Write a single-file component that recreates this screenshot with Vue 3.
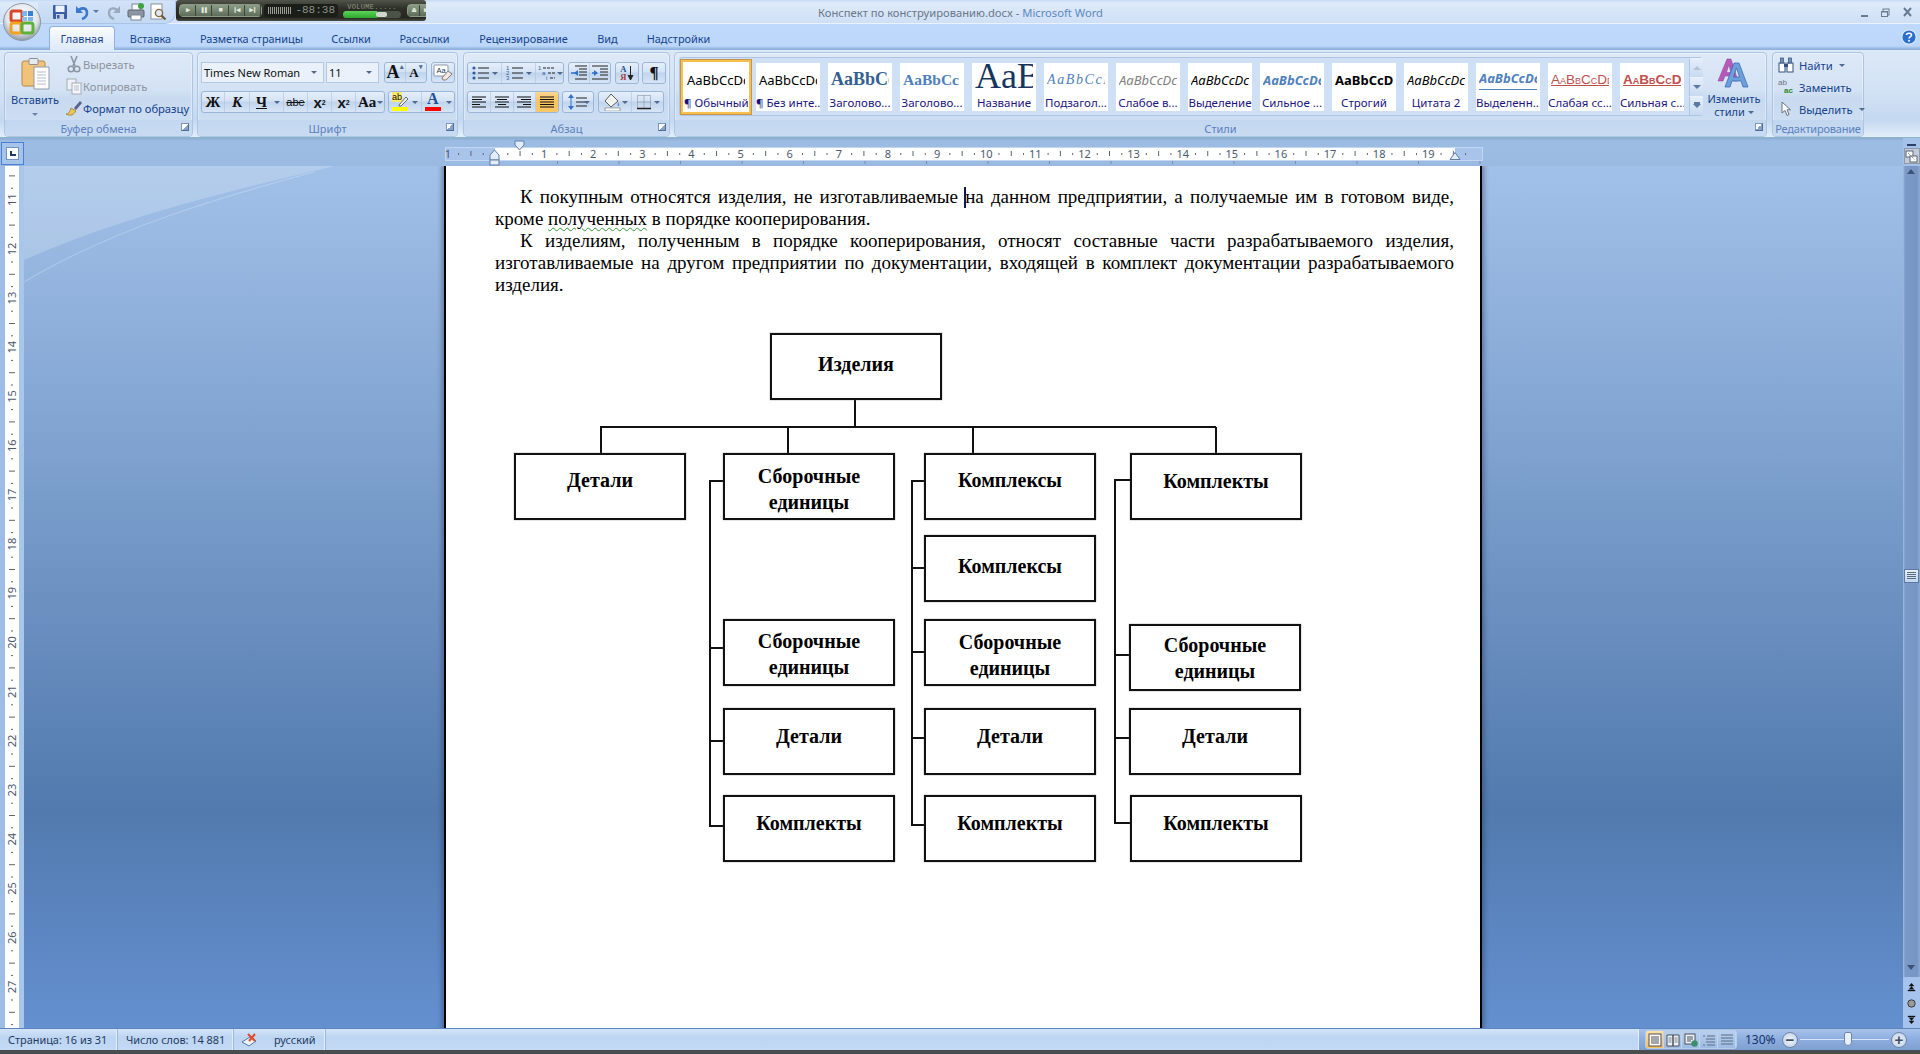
<script setup>
const tabs = [
  { t: 'Главная', w: 66, active: true }, { t: 'Вставка', w: 71 }, { t: 'Разметка страницы', w: 131 },
  { t: 'Ссылки', w: 68 }, { t: 'Рассылки', w: 79 }, { t: 'Рецензирование', w: 119 },
  { t: 'Вид', w: 49 }, { t: 'Надстройки', w: 93 },
]
const styles = [
  { s: 'AaBbCcDc', l: '¶ Обычный', c: 'normal', sel: true },
  { s: 'AaBbCcDc', l: '¶ Без инте...', c: 'normal' },
  { s: 'AaBbCc', l: 'Заголово...', c: 'h1' },
  { s: 'AaBbCc', l: 'Заголово...', c: 'h2' },
  { s: 'AaB', l: 'Название', c: 'title' },
  { s: 'AaBbCcI', l: 'Подзагол...', c: 'sub' },
  { s: 'AaBbCcDc', l: 'Слабое в...', c: 'weak' },
  { s: 'AaBbCcDc', l: 'Выделение', c: 'em' },
  { s: 'AaBbCcDc', l: 'Сильное ...', c: 'strong-em' },
  { s: 'AaBbCcDc', l: 'Строгий', c: 'strict' },
  { s: 'AaBbCcDc', l: 'Цитата 2', c: 'em' },
  { s: 'AaBbCcDc', l: 'Выделенн...', c: 'quote' },
  { s: 'AaBbCcDd', l: 'Слабая сс...', c: 'ref1' },
  { s: 'AaBbCcDd', l: 'Сильная с...', c: 'ref2' },
]
const aligns = [
  { rows: [[1, 15], [1, 11], [1, 15], [1, 9], [1, 15]] },
  { rows: [[1, 15], [3, 13], [1, 15], [4, 12], [1, 15]] },
  { rows: [[1, 15], [5, 15], [1, 15], [7, 15], [1, 15]] },
  { rows: [[1, 15], [1, 15], [1, 15], [1, 15], [1, 15]], on: true },
]
const zero = 50
const cm = 49.12
const hNums = Array.from({ length: 20 }, (_, i) => i).filter(i => i > 0).map(i => ({ n: i, x: zero + i * cm }))
const hDots = []
const hDash = []
for (let i = -1; i < 20; i++) {
  hDots.push(zero + (i + 0.25) * cm, zero + (i + 0.75) * cm)
  hDash.push(zero + (i + 0.5) * cm)
}
const tabStops = Array.from({ length: 16 }, (_, i) => 112 + i * 61.5)
const vNums = Array.from({ length: 17 }, (_, i) => ({ n: i + 11, y: 34 + i * 49.2 }))
const vDots = []
const vDash = []
for (let i = -1; i < 17; i++) {
  vDots.push(34 + (i + 0.25) * 49.2, 34 + (i + 0.75) * 49.2)
  vDash.push(34 + (i + 0.5) * 49.2)
}
const nodes = [
  { x: 770, y: 333, w: 172, h: 67, top: 16, text: ['Изделия'] },
  { x: 514, y: 453, w: 172, h: 67, top: 12, text: ['Детали'] },
  { x: 723, y: 453, w: 172, h: 67, top: 8, text: ['Сборочные', 'единицы'] },
  { x: 924, y: 453, w: 172, h: 67, top: 12, text: ['Комплексы'] },
  { x: 1130, y: 453, w: 172, h: 67, top: 13, text: ['Комплекты'] },
  { x: 924, y: 535, w: 172, h: 67, top: 16, text: ['Комплексы'] },
  { x: 723, y: 619, w: 172, h: 67, top: 7, text: ['Сборочные', 'единицы'] },
  { x: 924, y: 619, w: 172, h: 67, top: 8, text: ['Сборочные', 'единицы'] },
  { x: 1129, y: 624, w: 172, h: 67, top: 6, text: ['Сборочные', 'единицы'] },
  { x: 723, y: 708, w: 172, h: 67, top: 13, text: ['Детали'] },
  { x: 924, y: 708, w: 172, h: 67, top: 13, text: ['Детали'] },
  { x: 1129, y: 708, w: 172, h: 67, top: 13, text: ['Детали'] },
  { x: 723, y: 795, w: 172, h: 67, top: 13, text: ['Комплекты'] },
  { x: 924, y: 795, w: 172, h: 67, top: 13, text: ['Комплекты'] },
  { x: 1130, y: 795, w: 172, h: 67, top: 13, text: ['Комплекты'] },
].map(n => ({ ...n, style: { left: n.x - 446 + 'px', top: n.y - 166 + 'px', width: n.w + 'px', height: n.h + 'px', paddingTop: n.top + 'px' } }))
const wires = [
  'M855 399V427', 'M601 427H1216', 'M601 426V453', 'M788 427V453', 'M973 427V453', 'M1216 427V453',
  'M723 481H710V826H724', 'M710 648H723', 'M709 741H723',
  'M924 481H912V825H924', 'M912 568H924', 'M912 652H924', 'M912 738H925',
  'M1130 480H1115V823H1130', 'M1115 655H1129', 'M1115 738H1129',
]
</script>

<template>
  <div class="app">
    <!-- Title bar -->
    <header class="titlebar">
      <div class="qat">
        <svg class="qi" width="18" height="18" viewBox="0 0 18 18"><rect x="2" y="2" width="14" height="14" rx="1" fill="#3a5ea8"/><rect x="4.500" y="2.500" width="9" height="6.500" fill="#eef3fb"/><rect x="5" y="11" width="8" height="5" fill="#c9d3e2"/><rect x="6" y="12" width="2.500" height="3.500" fill="#3a5ea8"/></svg>
        <svg class="qi undo" width="18" height="18" viewBox="0 0 18 18"><path d="M3 3V10H10" fill="#3c78cf"/><path d="M5 9C7 4 14 4 14 10C14 13 12 15 9 16" fill="none" stroke="#3c78cf" stroke-width="2.600"/></svg>
        <span class="qarrow"></span>
        <svg class="qi redo" width="18" height="18" viewBox="0 0 18 18"><path d="M15 3V10H8" fill="#9aabbd"/><path d="M13 9C11 4 4 4 4 10C4 13 6 15 9 16" fill="none" stroke="#9aabbd" stroke-width="2.400"/></svg>
        <svg class="qi" width="18" height="18" viewBox="0 0 18 18"><rect x="5" y="1" width="8" height="7" fill="#f5f7fa" stroke="#7d8794"/><rect x="1" y="7" width="16" height="7" rx="1" fill="#8c95a1" stroke="#5c6570"/><rect x="4" y="12" width="10" height="5" fill="#fff" stroke="#7d8794"/><circle cx="14" cy="3" r="3" fill="#3ca33c"/></svg>
        <svg class="qi" width="18" height="18" viewBox="0 0 18 18"><rect x="2" y="1" width="11" height="15" fill="#fff" stroke="#8a919c"/><circle cx="10" cy="10" r="3.600" fill="#dbe9f8" stroke="#8a6a3a" stroke-width="1.400"/><path d="M12.500 12.500L16.500 16.500" stroke="#6e5530" stroke-width="2"/></svg>
      </div>

      <div class="player">
        <div class="pgroup">
          <span v-for="p in ['▶', '❚❚', '■', '❙◀', '▶❙']" :key="p" class="pbtn">{{ p }}</span>
        </div>
        <div class="lcd"><span class="lcd-bars"></span><span>-88:38</span></div>
        <div class="vol">
          <span class="vol-t">VOLUME.....</span>
          <span class="vol-track"><span class="vol-fill"></span><span class="vol-thumb"></span></span>
        </div>
        <div class="pgroup eject"><span class="pbtn">⏏</span><span class="pbtn">▶</span></div>
      </div>

      <div class="doc-title">Конспект по конструированию.docx - <span>Microsoft Word</span></div>

      <div class="winctl">
        <svg width="60" height="16" viewBox="0 0 60 16">
          <rect x="1" y="11" width="7" height="2" fill="#6a7a90"/>
          <rect x="23" y="5" width="6" height="6" fill="none" stroke="#6a7a90"/><rect x="21.500" y="7.500" width="6" height="5" fill="#d6e4f6" stroke="#6a7a90"/><rect x="21" y="7" width="7" height="1.500" fill="#6a7a90"/>
          <path d="M44 4L51 12M51 4L44 12" stroke="#6a7a90" stroke-width="2"/>
        </svg>
      </div>
    </header>

    <div class="office">
      <svg width="38" height="38" viewBox="0 0 38 38">
        <defs>
          <radialGradient id="ob" cx="50%" cy="35%" r="65%"><stop offset="0" stop-color="#fdfdfd"/><stop offset=".65" stop-color="#e2e6ea"/><stop offset="1" stop-color="#8e97a3"/></radialGradient>
        </defs>
        <circle cx="19" cy="19" r="18.500" fill="url(#ob)" stroke="#8b97a8"/>
        <rect x="8" y="8" width="11" height="10" rx="2" fill="none" stroke="#d9472b" stroke-width="3"/>
        <rect x="19" y="8" width="5" height="5" fill="#7fb4e8"/><rect x="25" y="8" width="5" height="5" fill="#3a7fd0"/>
        <rect x="19" y="14" width="5" height="4" fill="#8fbfe9"/><rect x="25" y="14" width="5" height="4" fill="#7fb4e8"/>
        <rect x="8" y="20" width="10" height="10" rx="2" fill="none" stroke="#f1a21f" stroke-width="3"/>
        <rect x="19" y="20" width="11" height="10" rx="2" fill="none" stroke="#5db13c" stroke-width="3"/>
      </svg>
    </div>

    <!-- Tabs -->
    <nav class="tabs">
      <span v-for="t in tabs" :key="t.t" class="tab" :class="{ active: t.active }" :style="{ width: t.w + 'px' }">{{ t.t }}</span>
      <svg class="help" width="16" height="16" viewBox="0 0 16 16"><circle cx="8" cy="8" r="7.200" fill="#2d6fd0" stroke="#dfeafa" stroke-width="1.200"/><path d="M5.500 6C5.500 3.600 10.500 3.600 10.500 6C10.500 7.600 8 7.600 8 9.500" fill="none" stroke="#fff" stroke-width="1.600"/><circle cx="8" cy="11.800" r="1" fill="#fff"/></svg>
    </nav>

    <!-- Ribbon -->
    <section class="ribbon">
      <div class="group g-clip">
        <div class="gbody clip">
          <div class="paste">
            <svg width="30" height="32" viewBox="0 0 30 32">
              <rect x="1" y="3" width="23" height="25" rx="2" fill="#f0c27a" stroke="#b98a45"/>
              <rect x="8" y="0.500" width="9" height="6" rx="1" fill="#e6e9ee" stroke="#8a8f98"/>
              <path d="M13 9H28V31H13Z" fill="#fff" stroke="#8f9aa8"/>
              <path d="M16 14H25M16 17H25M16 20H25M16 23H25M16 26H25" stroke="#b5bdc8"/>
            </svg>
            <span class="paste-t">Вставить</span>
            <span class="down"></span>
          </div>
          <div class="smalls">
            <div class="srow dis">
              <svg class="sic" width="18" height="18" viewBox="0 0 18 18"><path d="M6 1L10 11M12 1L8 11" stroke="#8c95a2" stroke-width="1.600"/><circle cx="6" cy="14" r="2.800" fill="none" stroke="#8c95a2" stroke-width="1.500"/><circle cx="12" cy="14" r="2.800" fill="none" stroke="#8c95a2" stroke-width="1.500"/></svg>
              <span>Вырезать</span>
            </div>
            <div class="srow dis">
              <svg class="sic" width="18" height="18" viewBox="0 0 18 18"><rect x="2" y="2" width="9" height="11" fill="#eef1f5" stroke="#a3abb6"/><rect x="7" y="6" width="9" height="11" fill="#f5f7fa" stroke="#a3abb6"/><path d="M9 9H14M9 11H14M9 13H14" stroke="#b5bcc6"/></svg>
              <span>Копировать</span>
            </div>
            <div class="srow">
              <svg class="sic" width="18" height="18" viewBox="0 0 18 18"><path d="M1 15C4 15 5 12 6 9L11 12C9 15 6 18 1 15Z" fill="#e9c55a" stroke="#9a7a2a" stroke-width=".8"/><path d="M9 9L15 2L17 4L11 11" fill="#5a5f8c"/></svg>
              <span>Формат по образцу</span>
            </div>
          </div>
        </div>
        <div class="glabel">Буфер обмена<i class="launch"></i></div>
      </div>

      <div class="group g-font">
        <div class="gbody rows font">
          <div class="row">
            <div class="combo w-font"><span>Times New Roman</span><span class="dn"></span></div>
            <div class="combo w-size"><span>11</span><span class="dn"></span></div>
            <div class="bg w-grow"><span class="b big">A<sup>▴</sup></span><span class="b big small">A<sup>▾</sup></span></div>
            <div class="bg w-clear"><span class="b">
              <svg width="20" height="18" viewBox="0 0 20 18"><rect x="1" y="1" width="14" height="11" rx="1" fill="#fff" stroke="#8b97a8"/><text x="3.500" y="9" font-size="7.500" font-family="Liberation Sans, sans-serif" fill="#203a60">Aa</text><path d="M9 14L15 7L19 10L13 16H10Z" fill="#f2e8e0" stroke="#8b7a78"/></svg>
            </span></div>
          </div>
          <div class="row">
            <div class="bg w-fmt">
              <span class="b f serif bold w1">Ж</span>
              <span class="b f serif bold ital w2">К</span>
              <span class="b f serif bold und w3">Ч<i class="dn2"></i></span>
              <span class="b f sans strike w4">abe</span>
              <span class="b f bold sans w4">x<sub>2</sub></span>
              <span class="b f bold sans w4">x<sup>2</sup></span>
              <span class="b f serif bold w5">Aa<i class="dn2"></i></span>
            </div>
            <div class="bg w-col">
              <span class="b f col1"><span class="colr"><span class="hl-t">ab</span><svg width="12" height="12" viewBox="0 0 12 12"><path d="M2 10L9 2L11 4L4 11H2Z" fill="#f2f2f2" stroke="#6b6b6b"/></svg><i class="bar yellow"></i></span><i class="dn2"></i></span>
              <span class="b f col2"><span class="colr a"><span class="serif bold a-t">A</span><i class="bar red"></i></span><i class="dn2"></i></span>
            </div>
          </div>
        </div>
        <div class="glabel">Шрифт<i class="launch"></i></div>
      </div>

      <div class="group g-para">
        <div class="gbody rows para">
          <div class="row">
            <div class="bg w-list">
              <span class="b l1"><svg width="18" height="16" viewBox="0 0 18 16"><g fill="#2f5da0"><circle cx="2" cy="3" r="1.600"/><circle cx="2" cy="8" r="1.600"/><circle cx="2" cy="13" r="1.600"/></g><path d="M6 3H17M6 8H17M6 13H17" stroke="#222" stroke-width="1.200"/></svg><i class="dn2"></i></span>
              <span class="b l2"><svg width="18" height="16" viewBox="0 0 18 16"><g fill="#2f5da0" font-size="6" font-family="Liberation Sans, sans-serif"><text x="0" y="5">1</text><text x="0" y="10">2</text><text x="0" y="15">3</text></g><path d="M6 3H17M6 8H17M6 13H17" stroke="#222" stroke-width="1.200"/></svg><i class="dn2"></i></span>
              <span class="b l3"><svg width="18" height="16" viewBox="0 0 18 16"><g fill="#2f5da0" font-size="6" font-family="Liberation Sans, sans-serif"><text x="0" y="5">1</text><text x="4" y="10">a</text><text x="8" y="15">i</text></g><path d="M5 3H17M10 8H17M12 13H17" stroke="#222" stroke-width="1.200" stroke-dasharray="3 1"/></svg><i class="dn3"></i></span>
            </div>
            <div class="bg w-ind">
              <span class="b"><svg width="18" height="16" viewBox="0 0 18 16"><path d="M4 8L8 5V11Z" fill="#2f6fd0"/><path d="M1 8H6" stroke="#2f6fd0" stroke-width="1.500"/><path d="M5 1H17M9 4H17M9 7H17M9 10H17M5 14H17" stroke="#222"/></svg></span>
              <span class="b"><svg width="18" height="16" viewBox="0 0 18 16"><path d="M7 8L3 5V11Z" fill="#2f6fd0"/><path d="M1 8H5" stroke="#2f6fd0" stroke-width="1.500"/><path d="M1 1H17M9 4H17M9 7H17M9 10H17M1 14H17" stroke="#222"/></svg></span>
            </div>
            <div class="bg w-sq"><span class="b sort"><span class="sort-t"><em>А</em><em class="red">Я</em></span><svg width="7" height="16" viewBox="0 0 7 16"><path d="M3.500 1V13M1 10L3.500 15L6 10" stroke="#222" fill="#222"/></svg></span></div>
            <div class="bg w-sq"><span class="b pil">¶</span></div>
          </div>
          <div class="row">
            <div class="bg w-align">
              <span v-for="(a, i) in aligns" :key="i" class="b" :class="{ on: a.on }">
                <svg width="16" height="14" viewBox="0 0 16 14"><path v-for="(r, j) in a.rows" :key="j" :d="`M${r[0]} ${2 + j * 2.500}H${r[1]}`" stroke="#111" stroke-width="1.200"/></svg>
              </span>
            </div>
            <div class="bg w-space"><span class="b"><svg width="8" height="18" viewBox="0 0 8 18"><path d="M4 1L7 5H1ZM4 17L7 13H1Z" fill="#2f6fd0"/><path d="M4 4V14" stroke="#2f6fd0"/></svg><svg width="11" height="12" viewBox="0 0 11 12"><path d="M0 2H11M0 6H11M0 10H11" stroke="#222" stroke-width="1.200"/></svg><i class="dn2"></i></span></div>
            <div class="bg w-shade">
              <span class="b s1"><svg width="18" height="18" viewBox="0 0 18 18"><path d="M8 1L15 8L8 14L2 8Z" fill="#f3f3f0" stroke="#5b5b5b"/><path d="M15 9C16 11 17 12 16 13C15 14 14 12 15 9Z" fill="#5b8fd0"/><rect x="2" y="15" width="15" height="3" fill="#fff" stroke="#6b6b6b" stroke-width=".6"/></svg><i class="dn2"></i></span>
              <span class="b s2"><svg width="16" height="16" viewBox="0 0 16 16"><rect x="1.500" y="1.500" width="13" height="13" fill="none" stroke="#7a8694" stroke-dasharray="1 1"/><path d="M8 1.500V14.500M1.500 8H14.500" stroke="#7a8694" stroke-dasharray="1 1"/><path d="M1 14.500H15" stroke="#222" stroke-width="1.300"/></svg><i class="dn2"></i></span>
            </div>
          </div>
        </div>
        <div class="glabel">Абзац<i class="launch"></i></div>
      </div>

      <div class="group g-styles">
        <div class="gbody stylesb">
          <div class="gallery">
            <div class="gitems">
              <div v-for="(s, i) in styles" :key="i" class="sitem" :class="{ sel: s.sel }">
                <div class="ssample" :class="s.c"><span>{{ s.s }}</span></div>
                <div class="slabel">{{ s.l }}</div>
              </div>
            </div>
            <div class="gscroll">
              <span class="gs dim"><i class="tri up"></i></span>
              <span class="gs"><i class="tri"></i></span>
              <span class="gs"><i class="tri bar-top"></i></span>
            </div>
          </div>
          <div class="change">
            <svg width="34" height="30" viewBox="0 0 34 30">
              <path d="M1 23L10 1H14L21 23H16.500L15 18H8L6 23ZM9.500 14.500H14L11.800 7Z" fill="#b55ab8" stroke="#8f3f96" stroke-width=".5"/>
              <path d="M8 29L17 5H22L31 29H26L24 23H15L13 29ZM16.500 19H22.500L19.500 10Z" fill="#6d9fdc" stroke="#2f62ad" stroke-width=".7"/>
            </svg>
            <span>Изменить</span>
            <span>стили<i class="dn2 inl"></i></span>
          </div>
        </div>
        <div class="glabel">Стили<i class="launch"></i></div>
      </div>

      <div class="group g-edit">
        <div class="gbody edit">
          <div class="srow">
            <svg class="eic" width="16" height="16" viewBox="0 0 16 16"><rect x="1" y="6" width="6" height="9" fill="#fff" stroke="#33507e"/><rect x="9" y="6" width="6" height="9" fill="#fff" stroke="#33507e"/><rect x="2.500" y="1" width="3" height="5" fill="#6f8fb8" stroke="#33507e" stroke-width=".7"/><rect x="10.500" y="1" width="3" height="5" fill="#6f8fb8" stroke="#33507e" stroke-width=".7"/><rect x="6" y="7" width="4" height="3" fill="#33507e"/></svg>
            <span>Найти</span><i class="dn2 inl2"></i>
          </div>
          <div class="srow">
            <span class="eic rep"><b>ab</b><b class="g">ac</b></span>
            <span>Заменить</span>
          </div>
          <div class="srow">
            <svg class="eic" width="16" height="16" viewBox="0 0 16 16"><path d="M4 1V12L7 9.500L9 14.500L11 13.500L9 8.800H12.500Z" fill="#fff" stroke="#6b7280"/></svg>
            <span>Выделить</span><i class="dn2 inl2"></i>
          </div>
        </div>
        <div class="glabel wide">Редактирование</div>
      </div>
    </section>

    <!-- Workspace -->
    <main class="work">
      <div class="rulerrow">
        <button class="tabsel"><i></i></button>
        <svg class="hruler" width="1040" height="26" viewBox="0 0 1040 26">
          <rect x="0.500" y="7.500" width="1037" height="13" fill="#a9c4ea" stroke="#c3d7f1"/>
          <rect x="50" y="8" width="960" height="12" fill="#fff"/>
          <g fill="#5a6675">
            <rect v-for="d in hDots" :key="'d' + d" :x="d" y="13" width="1" height="2"/>
            <rect v-for="d in hDash" :key="'h' + d" :x="d" y="11" width="1" height="5"/>
          </g>
          <g class="rtxt">
            <text x="3" y="18">1</text>
            <text v-for="n in hNums" :key="n.n" :x="n.x" y="18">{{ n.n }}</text>
          </g>
          <g fill="#7d8ea3"><rect v-for="t in tabStops" :key="t" :x="t" y="21" width="1" height="3"/></g>
          <path d="M70 1H79V5L74.500 10L70 5Z" fill="#e4ecf7" stroke="#5e7fa8"/>
          <path d="M45 15L49.500 10L54 15V20H45Z" fill="#e4ecf7" stroke="#5e7fa8"/>
          <rect x="45" y="20" width="9" height="5" fill="#e4ecf7" stroke="#5e7fa8"/>
          <path d="M1005 19.500L1010 12.500L1015 19.500Z" fill="#e4ecf7" stroke="#5e7fa8"/>
        </svg>
        <div class="splitbox"><i class="splitdash"></i>
          <span class="rtoggle">
            <svg width="13" height="13" viewBox="0 0 13 13"><rect x="1" y="1" width="7" height="6" fill="#fff" stroke="#5a6474"/><rect x="5" y="6" width="7" height="6" fill="#fff" stroke="#5a6474"/><path d="M3 3L10 10" stroke="#5a6474" stroke-dasharray="1 1"/></svg>
          </span>
        </div>
      </div>

      <div class="mainrow">
        <div class="vruler-col">
          <svg width="14" height="862" viewBox="0 0 14 862" class="vruler">
            <g fill="#5a6675">
              <rect v-for="d in vDots" :key="'vd' + d" x="6" :y="d" width="2" height="1"/>
              <rect v-for="d in vDash" :key="'vh' + d" x="4" :y="d" width="6" height="1"/>
            </g>
            <text v-for="n in vNums" :key="n.n" class="vtxt" :transform="`translate(11 ${n.y + 6}) rotate(-90)`">{{ n.n }}</text>
          </svg>
        </div>

        <div class="canvas">
          <svg class="swoosh" width="360" height="130" viewBox="0 0 360 130">
            <path d="M0 94C110 46 220 22 310 0H0Z" fill="#fff" fill-opacity=".2"/>
            <path d="M0 116C90 62 200 30 290 6" fill="none" stroke="#fff" stroke-opacity=".22" stroke-width="1.200"/>
          </svg>
          <article class="page">
            <p>К покупным относятся изделия, не изготавливаемые <span class="caret"></span>на данном предприятии, а получаемые им в готовом виде, кроме <span class="spell">полученных</span> в порядке кооперирования.</p>
            <p>К изделиям, полученным в порядке кооперирования, относят составные части разрабатываемого изделия, изготавливаемые на другом предприятии по документации, входящей в комплект документации разрабатываемого изделия.</p>
            <svg class="wires" width="1034" height="862" viewBox="446 166 1034 862">
              <path v-for="w in wires" :key="w" :d="w" fill="none" stroke="#111" stroke-width="2"/>
            </svg>
            <div v-for="(n, i) in nodes" :key="i" class="node" :style="n.style">
              <div v-for="l in n.text" :key="l">{{ l }}</div>
            </div>
          </article>
        </div>

        <aside class="vscroll">
          <div class="track">
            <span class="arrow au"></span>
            <span class="sp1"></span>
            <span class="thumb"><i></i></span>
            <span class="sp2"></span>
            <span class="arrow ad"></span>
          </div>
          <div class="navb">
            <svg width="9" height="9" viewBox="0 0 11 11"><path d="M5.500 0L9 4H2ZM5.500 4L9 8H2Z" fill="#111"/><rect x="1" y="8.500" width="9" height="1.500" fill="#111"/></svg>
            <svg width="9" height="9" viewBox="0 0 11 11"><circle cx="5.500" cy="5.500" r="4.500" fill="#9a9a9a" stroke="#222"/></svg>
            <svg width="9" height="9" viewBox="0 0 11 11"><rect x="1" y="1" width="9" height="1.500" fill="#111"/><path d="M5.500 7L2 3H9ZM5.500 11L2 7H9Z" fill="#111"/></svg>
          </div>
        </aside>
      </div>
    </main>

    <!-- Status bar -->
    <footer class="status">
      <div class="st-left">
        <span class="st st1">Страница: 16 из 31</span>
        <span class="st st2">Число слов: 14 881</span>
        <span class="st st3">
          <svg width="17" height="14" viewBox="0 0 17 14"><path d="M1 9L9 4L15 8L8 13Z" fill="#eef3fb" stroke="#4f76ad"/><path d="M7 1L14 8M14 1L8 8" stroke="#e24a2a" stroke-width="2"/></svg>
          <span>русский</span>
        </span>
      </div>
      <div class="st-right">
        <div class="views">
          <span class="v on"><svg width="14" height="14" viewBox="0 0 14 14"><rect x="1" y="1" width="12" height="12" fill="#fff" stroke="#4a4f58"/><path d="M3 4H11M3 6H11M3 8H11M3 10H11" stroke="#4a4f58"/></svg></span>
          <span class="v"><svg width="14" height="14" viewBox="0 0 14 14"><path d="M1 2H7V13H1ZM7 2H13V13H7Z" fill="#eef2f8" stroke="#4a4f58"/><path d="M2.500 5H5.500M2.500 7H5.500M2.500 9H5.500M8.500 5H11.500M8.500 7H11.500M8.500 9H11.500" stroke="#7a808a"/></svg></span>
          <span class="v"><svg width="14" height="14" viewBox="0 0 14 14"><rect x="1" y="1" width="10" height="10" fill="#eef2f8" stroke="#4a4f58"/><path d="M3 4H9M3 6H9M3 8H7" stroke="#4a4f58"/><circle cx="10.500" cy="10.500" r="3.200" fill="#3a8f6a"/></svg></span>
          <span class="v"><svg width="14" height="14" viewBox="0 0 14 14"><path d="M1 3H3M5 3H13M4 6H13M4 9H13M1 12H3M5 12H13" stroke="#5a6a80"/></svg></span>
          <span class="v"><svg width="14" height="14" viewBox="0 0 14 14"><path d="M1 2H13M1 5H13M1 8H13M1 11H13" stroke="#5a6a80"/></svg></span>
        </div>
        <span class="zoomv">130%</span>
        <span class="zbtn">−</span>
        <span class="zline"><i></i></span>
        <span class="zbtn">+</span>
      </div>
    </footer>
    <div class="taskedge"></div>
  </div>
</template>

<style>
html, body { margin: 0; padding: 0; overflow: hidden; }
</style>

<style scoped>
.app {
  position: relative; width: 1920px; height: 1054px; overflow: hidden; display: flex; flex-direction: column;
  font-family: "Noto Sans", "DejaVu Sans", sans-serif; font-size: 11px; color: #15428b;
}
i { font-style: normal; display: block; }

/* title */
.titlebar { position: relative; height: 24px; flex: none; display: flex; align-items: center; background: linear-gradient(#c6daf5 0, #dfebfa 3px, #d5e4f7 14px, #cfe0f6 23px, #eaf3fd 23px); }
.qat { margin-left: 38px; width: 138px; height: 23px; box-sizing: border-box; padding-left: 13px; display: flex; align-items: center; background: linear-gradient(#d3e3f8, #c3d8f3); border-radius: 0 0 12px 0; border-bottom: 1px solid #a9c4e6; border-right: 1px solid #a9c4e6; }
.qi { flex: none; margin-right: 4px; }
.qi.undo { margin-right: 2px; }
.qarrow { width: 0; height: 0; flex: none; border: 3px solid transparent; border-top: 3px solid #5a7ba8; border-bottom: 0; }
.redo { margin-left: 6px; }

.player { position: absolute; left: 176px; top: 0; width: 250px; height: 21px; box-sizing: border-box; padding: 0 3px; background: linear-gradient(#52554b, #2d2f29 40%, #26281f 85%, #4b4e45); border-radius: 3px; display: flex; align-items: center; gap: 2px; color: #cfd6c4; font-family: "Liberation Mono", monospace; overflow: hidden; }
.pgroup { display: flex; width: 83px; height: 13px; background: #6b7d68; border: 1px solid #8a9a84; border-radius: 4px; box-sizing: border-box; flex: none; }
.pgroup.eject { width: 26px; margin-left: 3px; }
.pbtn { flex: 1; text-align: center; font-size: 7px; line-height: 11px; color: #e4ecdc; border-right: 1px solid #3c4339; overflow: hidden; white-space: nowrap; letter-spacing: -1px; background: linear-gradient(#8c9c86, #5d6d5a); }
.lcd { width: 74px; height: 13px; flex: none; background: #1b1d18; border-radius: 3px; color: #8d9287; font-size: 11px; line-height: 13px; display: flex; justify-content: flex-end; padding-right: 3px; box-sizing: border-box; }
.lcd-bars { flex: 1; margin: 3px 4px 3px 4px; background: repeating-linear-gradient(90deg, #9aa093 0 1px, transparent 1px 2px); }
.vol { width: 60px; flex: none; margin-left: 2px; display: flex; flex-direction: column; align-items: center; }
.vol-t { font-size: 7px; line-height: 8px; color: #8c9a80; letter-spacing: .3px; white-space: nowrap; }
.vol-track { position: relative; display: block; width: 58px; height: 7px; background: #4b5247; border-radius: 4px; overflow: hidden; }
.vol-fill { display: block; width: 34px; height: 7px; background: linear-gradient(#5fd35a, #2aa82e); }
.vol-thumb { position: absolute; left: 33px; top: 1px; width: 11px; height: 5px; background: #cfd6cf; border-radius: 2px; }

.doc-title { position: absolute; left: 818px; top: 5px; white-space: nowrap; color: #6a7788; font-size: 11.200px; line-height: 16px; }
.doc-title span { color: #5b88c0; }
.winctl { position: absolute; right: 0; top: 4px; width: 60px; }

.office { position: absolute; left: 3px; top: 3px; z-index: 3; width: 38px; height: 38px; }

/* tabs */
.tabs { height: 26px; flex: none; position: relative; display: flex; padding-left: 49px; box-sizing: border-box; background: linear-gradient(#bed9fb, #bcd7fa 22px, #8fb1dc 25px); }
.tab { display: flex; align-items: center; justify-content: center; flex: none; height: 26px; font-size: 10.900px; color: #15428b; box-sizing: border-box; padding-top: 2px; white-space: nowrap; }
.tab.active { background: linear-gradient(#fbfdff, #e7f0fb 60%, #dfeafa); border: 1px solid #8fb1dc; border-bottom: 0; border-radius: 4px 4px 0 0; margin-top: 2px; height: 24px; padding-top: 0; z-index: 1; }
.help { position: absolute; right: 3px; top: 5px; }

/* ribbon */
.ribbon { height: 88px; flex: none; box-sizing: border-box; padding: 2px 2px 1px 4px; display: flex; background: linear-gradient(#dbe8f7 0, #d2e2f5 50%, #c4d8f0 80%, #e2eefa 100%); border-bottom: 1px solid #8bb5c9; }
.group { position: relative; height: 85px; flex: none; box-sizing: border-box; border: 1px solid #abc5e3; border-radius: 4px; background: linear-gradient(#dee9f7, #d3e2f4 45%, #c8daf0 55%, #cfe0f4); display: flex; flex-direction: column; box-shadow: 0 0 0 1px rgba(255,255,255,.35) inset; }
.g-clip { width: 189px; margin-right: 4px; }
.g-font { width: 261px; margin-right: 5px; }
.g-para { width: 207px; margin-right: 4px; }
.g-styles { width: 1093px; margin-right: 5px; }
.g-edit { width: 92px; }
.gbody { flex: 1; display: flex; min-height: 0; }
.glabel { position: relative; height: 16px; flex: none; box-sizing: border-box; padding-top: 1px; text-align: center; font-size: 11px; line-height: 15px; color: #5b7fbf; background: linear-gradient(#c2d7ef, #c8dbf2); border-radius: 0 0 3px 3px; }
.launch { position: absolute; right: 3px; top: 3px; width: 8px; height: 8px; box-sizing: border-box; border: 1px solid #7d96b9; border-right-color: #4f6d96; border-bottom-color: #4f6d96; background: linear-gradient(135deg, #fff 50%, #87a2c6 50%); }

.clip { padding: 0; }
.paste { width: 60px; flex: none; display: flex; flex-direction: column; align-items: center; padding-top: 5px; box-sizing: border-box; }
.paste svg { margin-left: 2px; }
.paste-t { font-size: 11px; line-height: 14px; margin-top: 3px; white-space: nowrap; }
.down { width: 0; height: 0; border: 3px solid transparent; border-top: 3px solid #6a82a8; border-bottom: 0; margin-top: 6px; }
.smalls { padding-top: 0; }
.srow { height: 22px; display: flex; align-items: center; white-space: nowrap; font-size: 11.200px; color: #15428b; }
.srow.dis { color: #8e939e; }
.sic { margin-right: 0; flex: none; }

.rows { flex-direction: column; padding-top: 9px; gap: 7px; box-sizing: border-box; }
.font { padding-left: 3px; }
.para { padding-left: 3px; }
.row { display: flex; height: 22px; flex: none; }
.combo { height: 21px; box-sizing: border-box; border: 1px solid #b3c8e3; background: #eaf1fb; display: flex; align-items: center; justify-content: space-between; padding: 0 4px 0 2px; color: #111; font-size: 11px; white-space: nowrap; }
.w-font { width: 123px; margin-right: 2px; }
.w-size { width: 53px; margin-right: 5px; }
.dn { width: 0; height: 0; border: 3px solid transparent; border-top: 3px solid #4f6a90; border-bottom: 0; margin-right: 2px; }
.bg { display: flex; box-sizing: border-box; border: 1px solid #9ab7da; border-radius: 3px; background: linear-gradient(#e6effb, #d4e2f4 45%, #c0d4ec 50%, #d7e5f6); overflow: hidden; height: 22px; }
.b { flex: 1; display: flex; align-items: center; justify-content: center; position: relative; color: #111; box-sizing: border-box; min-width: 0; border-right: 1px solid rgba(170,195,225,.6); }
.b:last-child { border-right: 0; }
.w-grow { width: 43px; margin-right: 4px; height: 21px; }
.w-clear { width: 24px; height: 21px; }
.big { font-family: "Liberation Serif", serif; font-weight: 700; font-size: 18px; }
.big.small { font-size: 13px; }
.big sup { font-size: 7px; color: #4f6a90; align-self: flex-start; line-height: 8px; }
.w-fmt { width: 184px; margin-right: 3px; }
.w-col { width: 67px; }
.f { flex: none; font-size: 15px; }
.w1 { width: 23px; } .w2 { width: 25px; } .w3 { width: 34px; justify-content: flex-start; padding-left: 6px; } .w4 { width: 24px; } .w5 { width: 30px; justify-content: flex-start; padding-left: 2px; }
.serif { font-family: "Liberation Serif", serif; }
.sans { font-family: "Liberation Sans", sans-serif; }
.bold { font-weight: 700; }
.ital { font-style: italic; }
.und { text-decoration: underline; }
.strike { text-decoration: line-through; font-size: 11px; }
sub, sup { font-size: 7px; }
.dn2 { width: 0; height: 0; border: 3px solid transparent; border-top: 3px solid #4f6a90; border-bottom: 0; position: absolute; right: 3px; top: 9px; }
.dn3 { width: 0; height: 0; border: 3px solid transparent; border-top: 3px solid #4f6a90; border-bottom: 0; position: absolute; right: 1px; top: 9px; }
.col1, .col2 { width: 33px; justify-content: flex-start; padding-left: 3px; }
.colr { position: relative; width: 17px; height: 18px; display: block; }
.hl-t { position: absolute; left: 0; top: -1px; font-size: 9px; line-height: 10px; background: #ffe96b; font-family: "Liberation Sans", sans-serif; }
.colr svg { position: absolute; left: 5px; top: 2px; }
.bar { position: absolute; left: 0; bottom: 0; width: 16px; height: 4px; }
.yellow { background: #ffff00; } .red { background: #f00; }
.a-t { position: absolute; left: 2px; top: -3px; font-size: 16px; line-height: 18px; color: #234f96; }

.w-list { width: 98px; margin-right: 4px; }
.l1, .l2 { flex: none; width: 34px; justify-content: flex-start; padding-left: 4px; }
.l3 { flex: none; width: 28px; justify-content: flex-start; padding-left: 2px; }
.w-ind { width: 44px; margin-right: 4px; }
.w-sq { width: 24px; margin-right: 3px; }
.sort { gap: 1px; }
.sort-t { display: flex; flex-direction: column; font: 700 8.500px/8px "Liberation Serif", serif; color: #234f96; }
.sort-t em { font-style: normal; }
.sort-t .red { color: #a0453b; background: none; }
.pil { font: 700 17px "Liberation Serif", serif; color: #111; }
.w-align { width: 92px; margin-right: 3px; }
.b.on { background: linear-gradient(#fdd88f, #fbc25c 50%, #fac868); }
.w-space { width: 32px; margin-right: 4px; }
.w-space .b { justify-content: flex-start; padding-left: 4px; gap: 1px; }
.w-shade { width: 66px; }
.s1, .s2 { justify-content: flex-start; padding-left: 4px; }

.stylesb { padding: 4px 0 0 4px; box-sizing: border-box; }
.gallery { width: 1024px; height: 59px; flex: none; box-sizing: border-box; border: 1px solid #adc6e4; border-radius: 3px; display: flex; background: #cfe0f5; }
.gitems { display: flex; gap: 8px; padding: 5px 0 0 4px; width: 1009px; box-sizing: border-box; flex: none; }
.sitem { position: relative; width: 64px; height: 48px; flex: none; background: #fff; font-size: 11.500px; text-align: center; color: #1c1480; }
.sitem.sel { box-shadow: 0 0 0 1px #fff, 0 0 0 3px #f6c04e, 0 0 0 4px #c8954a; }
.ssample { height: 31px; box-sizing: border-box; padding-top: 2px; overflow: hidden; display: flex; align-items: center; justify-content: flex-start; margin: 0 3px; white-space: nowrap; color: #000; }
.slabel { line-height: 17px; height: 17px; white-space: nowrap; overflow: hidden; }
.normal { font: 13px "Noto Sans", sans-serif; }
.h1 { font: 700 18px "Liberation Serif", serif; color: #365f91; }
.h2 { font: 700 15.500px "Liberation Serif", serif; color: #4f81bd; }
.title { font: 36px "Liberation Serif", serif; color: #17365d; align-items: flex-start; padding-top: 0; }
.title span { margin-top: -8px; }
.sub { font: italic 14px "Liberation Serif", serif; color: #4f81bd; letter-spacing: 1.600px; }
.weak { font: italic 13px "Noto Sans", sans-serif; color: #808080; }
.em { font: italic 13px "Noto Sans", sans-serif; color: #000; }
.strong-em { font: italic 700 13px "Noto Sans", sans-serif; color: #4f81bd; }
.strict { font: 700 13px "Noto Sans", sans-serif; color: #000; }
.quote { font: italic 700 13px "Noto Sans", sans-serif; color: #4f81bd; border-bottom: 1px solid #4f81bd; height: 24px; margin-top: 3px; margin-bottom: 4px; padding-top: 0; }
.ref1 { font: 13.500px "Liberation Sans", sans-serif; font-variant: small-caps; color: #c0504d; text-decoration: underline; }
.ref2 { font: 700 13.500px "Liberation Sans", sans-serif; font-variant: small-caps; color: #c0504d; text-decoration: underline; }
.gscroll { width: 14px; display: flex; flex-direction: column; flex: none; }
.gs { flex: 1; display: flex; align-items: center; justify-content: center; background: linear-gradient(#e5eefa, #c8daf1); border-left: 1px solid #adc6e4; border-top: 1px solid #e8f1fb; }
.tri { width: 0; height: 0; border: 4px solid transparent; border-top: 4px solid #5a7aa5; border-bottom: 0; }
.tri.up { border-top: 0; border-bottom: 4px solid #b4c2d4; }
.bar-top { box-shadow: 0 -3px 0 -1px #5a7aa5; }
.change { width: 60px; flex: none; margin-left: 1px; display: flex; flex-direction: column; align-items: center; font-size: 11px; line-height: 13px; padding-top: 1px; position: relative; }
.change svg { margin-bottom: 4px; }
.inl { position: static; display: inline-block; margin-left: 3px; vertical-align: 2px; }
.edit { flex-direction: column; padding: 1px 0 0 5px; box-sizing: border-box; }
.eic { width: 16px; height: 16px; flex: none; margin-right: 5px; }
.inl2 { position: static; margin-left: 6px; }
.rep { position: relative; display: flex; flex-direction: column; font: 700 8px/8px "Liberation Sans", sans-serif; color: #6c7280; }
.rep b:first-child { font-weight: 400; }
.rep .g { color: #2a8a2a; margin-left: 6px; }
.glabel.wide { white-space: nowrap; font-size: 11px; letter-spacing: -.2px; overflow: hidden; }

/* workspace */
.work { flex: 1; min-height: 0; display: flex; flex-direction: column; background: #9dbce3; }
.rulerrow { height: 28px; flex: none; display: flex; position: relative; background: linear-gradient(#8eacd3 0, #9dbce3 3px, #9bbae1); }
.tabsel { width: 23px; height: 23px; margin: 4px 0 0 1px; padding: 3px 4px; box-sizing: border-box; border: 1px solid #4b7fd8; background: #a6c4ea; flex: none; }
.tabsel i { width: 13px; height: 13px; box-sizing: border-box; background: #fff; border: 1px solid #6e93c4; position: relative; }
.tabsel i::after { content: ""; position: absolute; left: 3px; top: 3px; width: 6px; height: 5px; box-sizing: border-box; border-left: 2px solid #1f3a66; border-bottom: 2px solid #1f3a66; }
.hruler { margin: 2px 0 0 421px; flex: none; }
.rtxt text { font: 11px "Noto Sans", sans-serif; fill: #4c5a6e; text-anchor: middle; }
.splitbox { margin-left: auto; width: 17px; flex: none; display: flex; flex-direction: column; align-items: center; background: #a5c3ea; padding-top: 6px; box-sizing: border-box; }
.splitdash { width: 9px; height: 2px; background: #2c4068; margin-bottom: 2px; }
.rtoggle { width: 16px; height: 16px; background: #c2cbd9; border: 1px solid #8f99a8; display: flex; align-items: center; justify-content: center; box-sizing: border-box; }
.mainrow { flex: 1; min-height: 0; display: flex; }
.vruler-col { width: 24px; flex: none; box-sizing: border-box; padding-left: 5px; background: linear-gradient(90deg, #9dbde6 5px, #fff 5px, #fff 19px, #a9c6ec 19px); }
.vruler { display: block; }
.vtxt { font: 11px "Noto Sans", sans-serif; fill: #4c5a6e; }
.canvas { position: relative; flex: 1; min-width: 0; overflow: hidden; background: linear-gradient(#a2c1e9 0, #527aae 74.7%, #6490d0 100%); }
.swoosh { position: absolute; left: 0; top: 0; }
.page { position: relative; margin-left: 420px; padding: 20px 26px 0 49px; background: #fff; border-left: 2px solid #000; border-right: 2px solid #000; box-sizing: content-box; width: 959px; box-shadow: 0 0 5px 2px rgba(30,45,75,.45); font: 19px/22px "Liberation Serif", serif; color: #000; height: calc(100% - 20px); }
.page p { margin: 0; text-indent: 25px; text-align: justify; }
.caret { position: relative; display: inline-block; width: 0; height: 0; }
.caret::after { content: ""; position: absolute; left: -1px; top: -16px; width: 2px; height: 21px; background: #101848; }
.spell { text-decoration: underline wavy #2f9a3a 1px; text-underline-offset: 2px; }
.wires { position: absolute; left: 0; top: 0; }
.node { position: absolute; box-sizing: border-box; border: 2px solid #111; background: #fff; text-align: center; font: 700 20px/26px "Liberation Serif", serif; box-shadow: 0 0 1px #666; }

.vscroll { width: 17px; flex: none; display: flex; flex-direction: column; background: #a5c3ec; }
.track { height: 811px; display: flex; flex-direction: column; align-items: stretch; background: linear-gradient(90deg, #a2bde2 0, #7c9ac7 2px, #7695c4 14px, #8eaad2 17px); flex: none; }
.arrow { height: 16px; flex: none; position: relative; }
.arrow::after { content: ""; position: absolute; left: 4px; width: 0; height: 0; border: 4.500px solid transparent; }
.au::after { top: 3px; border-top: 0; border-bottom: 5px solid #3f5276; }
.ad::after { top: 4px; border-bottom: 0; border-top: 5px solid #3f5276; }
.sp1 { height: 387px; flex: none; }
.sp2 { flex: 1; }
.thumb { height: 14px; margin: 0 1px; flex: none; background: linear-gradient(#e6eef9, #c3d5ec); border: 1px solid #5d7aa6; box-sizing: border-box; display: flex; align-items: center; justify-content: center; }
.thumb i { width: 9px; height: 8px; background: repeating-linear-gradient(#5a6a80 0 1px, transparent 1px 2px); }
.navb { flex: 1; display: flex; flex-direction: column; justify-content: space-around; align-items: center; padding: 3px 0 1px; }

/* status */
.status { height: 22px; flex: none; display: flex; border-top: 1px solid #5b86bc; box-sizing: border-box; font-size: 10.900px; }
.st-left { width: 1638px; flex: none; display: flex; background: linear-gradient(#d3e4f8, #bdd5f2 40%, #c3daf6); }
.st { display: flex; align-items: center; box-sizing: border-box; border-right: 1px solid #e2edfa; white-space: nowrap; color: #1f3a62; box-shadow: 1px 0 0 #9cb9de; }
.st1 { width: 117px; padding-left: 8px; }
.st2 { width: 116px; padding-left: 9px; }
.st3 { width: 92px; padding-left: 8px; }
.st3 span { margin-left: 16px; }
.st-right { flex: 1; display: flex; align-items: center; background: linear-gradient(#a7c3ea, #8fafe0 45%, #7f9fcf 100%); border-left: 1px solid #e2edfa; box-sizing: border-box; color: #1a3a7a; }
.views { display: flex; width: 92px; height: 19px; margin-left: 6px; border: 1px solid #b7cceb; box-sizing: border-box; border-radius: 3px; background: linear-gradient(#b9d0ee, #9dbbe3); overflow: hidden; flex: none; }
.v { flex: 1; display: flex; align-items: center; justify-content: center; border-right: 1px solid #c0d4ee; }
.v.on { background: linear-gradient(#fde3a6, #f8be57); }
.zoomv { width: 28px; margin-left: 8px; font-size: 12px; color: #15336e; }
.zbtn { width: 16px; height: 16px; margin-left: 9px; border-radius: 50%; flex: none; box-sizing: border-box; border: 1px solid #6f86aa; background: radial-gradient(#f2f6fb, #b9cbe3); display: flex; align-items: center; justify-content: center; font: 700 15px/14px "Liberation Sans", sans-serif; color: #3d4c63; }
.zline { width: 89px; height: 1px; margin-left: 2px; flex: none; background: #d9e6f7; position: relative; }
.zline + .zbtn { margin-left: 2px; }
.zline i { position: absolute; left: 44px; top: -7px; width: 8px; height: 14px; box-sizing: border-box; background: #e8f0fa; border: 1px solid #6f86aa; border-radius: 2px 2px 4px 4px; }
.taskedge { height: 4px; flex: none; background: #4a4d50; }
</style>
